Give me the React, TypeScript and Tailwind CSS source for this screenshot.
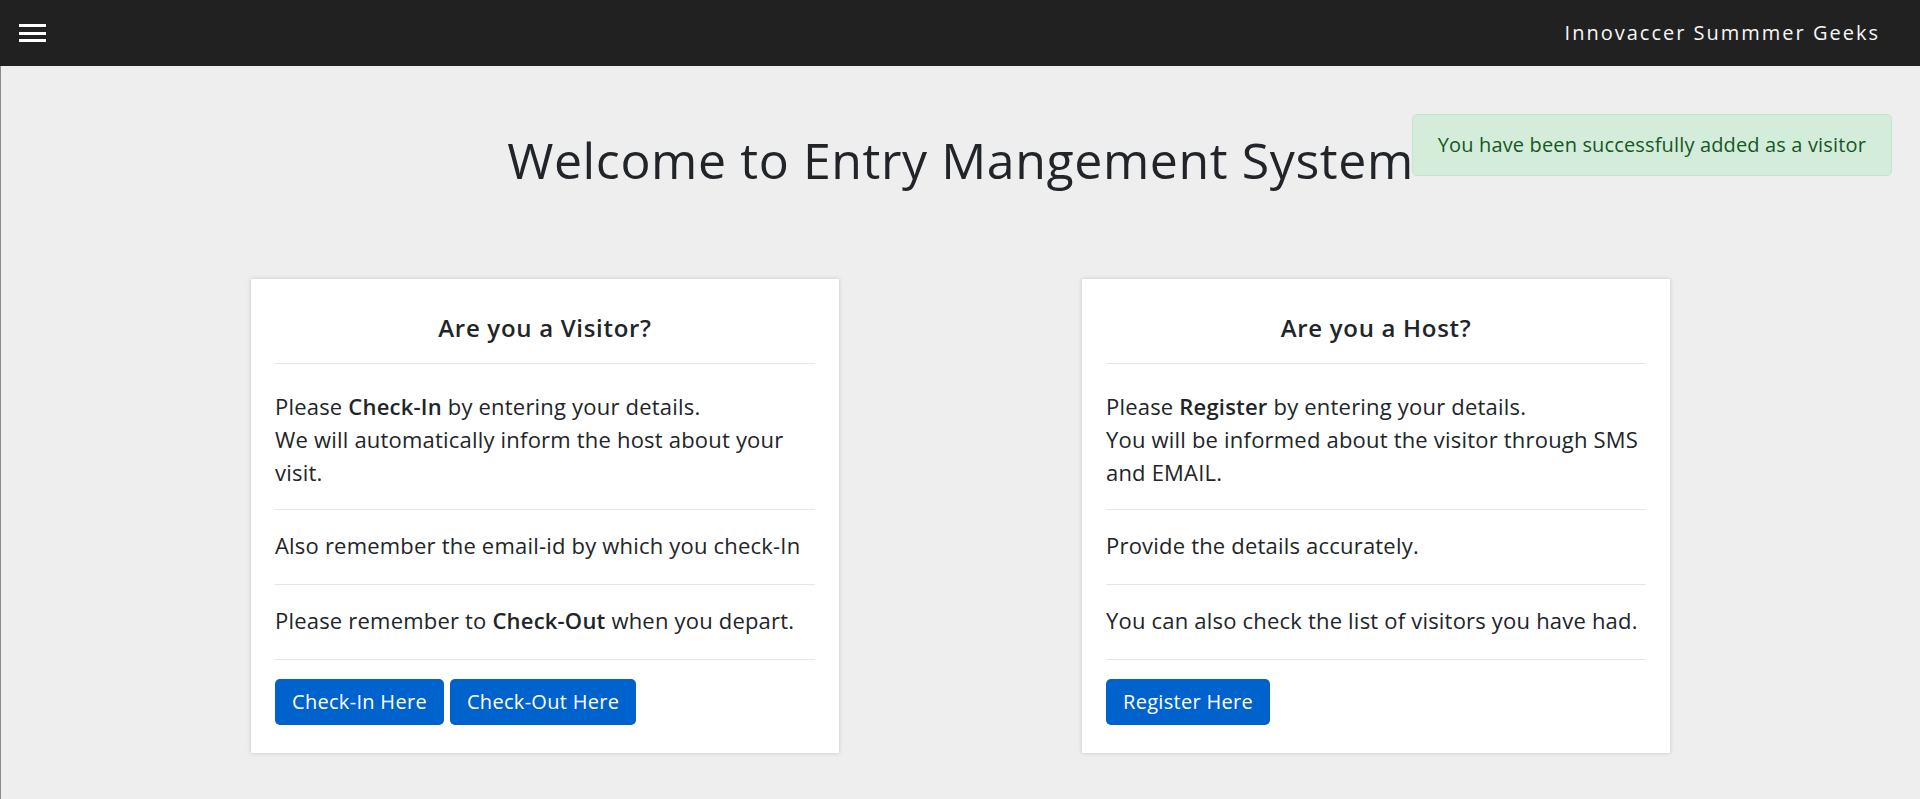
import React from 'react';

const font = { fontFamily: '"Open Sans", "Noto Sans", sans-serif' };

function Navbar() {
  return (
    <nav className="h-[66px] bg-[#212121] flex items-center justify-between pl-[19px] pr-[40px]">
      <button className="flex flex-col gap-[4.5px] w-[27px]" aria-label="menu">
        <span className="block h-[3px] w-full bg-white" />
        <span className="block h-[3px] w-full bg-white" />
        <span className="block h-[3px] w-full bg-white" />
      </button>
      <span className="text-[20px] tracking-[2px] text-[#f7f7f7]">Innovaccer Summmer Geeks</span>
    </nav>
  );
}

interface InfoCardProps {
  title: string;
  items: React.ReactNode[];
  buttons: string[];
}

function InfoCard({ title, items, buttons }: InfoCardProps) {
  return (
    <div className="w-[588px] bg-white px-[24px] pt-[34px] pb-[28px] shadow-[0_0_4px_rgba(0,0,0,0.18)]">
      <h5 className="text-center text-[24px] leading-[30px] tracking-[0.7px] font-semibold text-[#212529] pb-[20px] border-b border-[#e6e6e6]">
        {title}
      </h5>
      {items.map((item, i) => (
        <div
          key={i}
          className={
            'border-b border-[#e6e6e6] text-[22px] leading-[33px] tracking-[0.2px] text-[#212529] ' +
            (i === 0 ? 'pt-[26px] pb-[20px]' : 'pt-[19px] pb-[22px]')
          }
        >
          {item}
        </div>
      ))}
      <div className="pt-[19px] flex gap-[6px]">
        {buttons.map((b) => (
          <button
            key={b}
            className="h-[46px] px-[17px] rounded-[5px] bg-[#0062cc] text-white text-[20px] leading-[30px] tracking-[0.3px]"
          >
            {b}
          </button>
        ))}
      </div>
    </div>
  );
}

export default function App() {
  return (
    <div className="min-h-screen bg-[#eeeeee] relative" style={font}>
      <Navbar />
      <main className="border-l border-[#8a8a8a] min-h-[733px] pt-[66px]">
        <h1 className="text-center text-[50px] leading-[57.6px] tracking-[0.6px] font-normal text-[#212529]">
          Welcome to Entry Mangement System
        </h1>
        <div className="flex justify-center gap-[243px] mt-[89px]">
          <InfoCard
            title="Are you a Visitor?"
            items={[
              <>
                Please <b className="font-semibold">Check-In</b> by entering your details.
                <br />
                We will automatically inform the host about your visit.
              </>,
              <>Also remember the email-id by which you check-In</>,
              <>
                Please remember to <b className="font-semibold">Check-Out</b> when you depart.
              </>,
            ]}
            buttons={['Check-In Here', 'Check-Out Here']}
          />
          <InfoCard
            title="Are you a Host?"
            items={[
              <>
                Please <b className="font-semibold">Register</b> by entering your details.
                <br />
                You will be informed about the visitor through SMS and EMAIL.
              </>,
              <>Provide the details accurately.</>,
              <>You can also check the list of visitors you have had.</>,
            ]}
            buttons={['Register Here']}
          />
        </div>
      </main>
      <div className="absolute top-[114px] right-[28px] bg-[#d4edda] border border-[#c3e6cb] rounded-[5px] px-[25px] py-[15px] text-[20px] leading-[30px] tracking-[0.15px] text-[#155724]">
        You have been successfully added as a visitor
      </div>
    </div>
  );
}
